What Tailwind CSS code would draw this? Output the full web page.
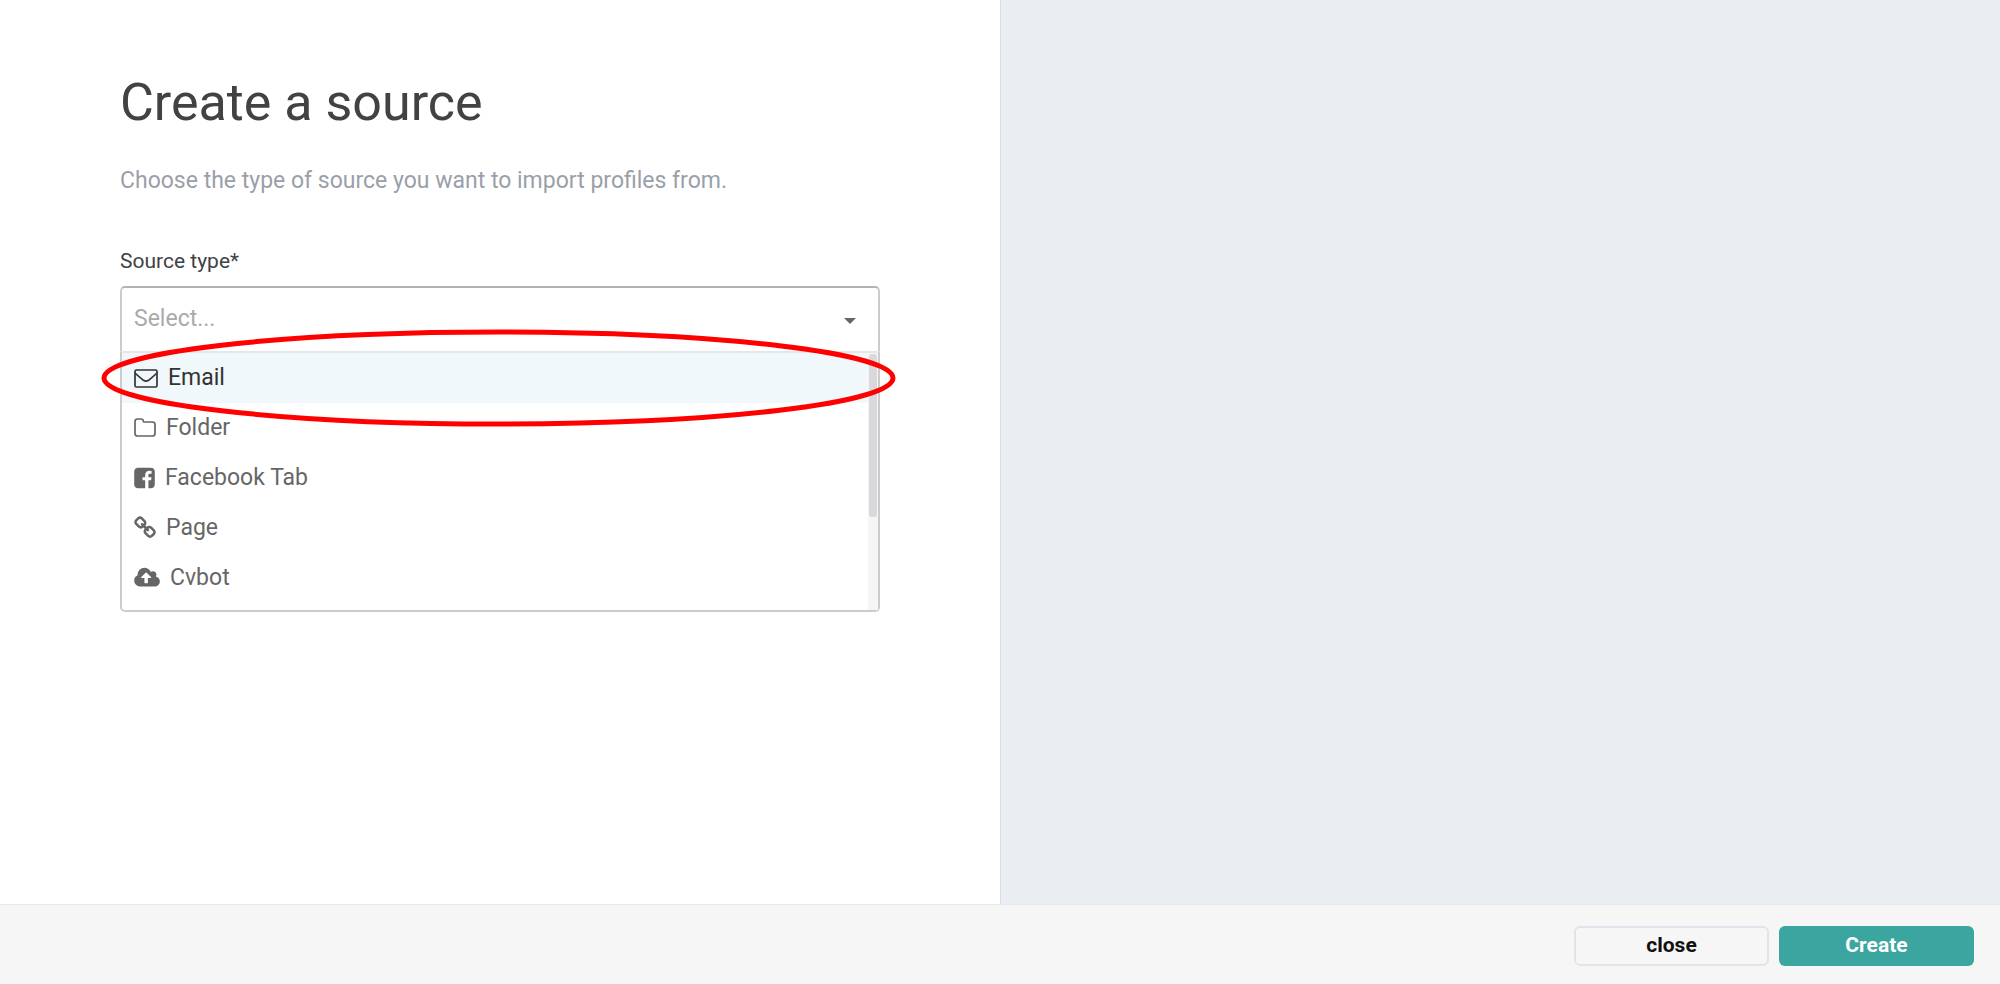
<!DOCTYPE html>
<html lang="en">
<head>
    <meta charset="UTF-8">
    <meta name="viewport" content="width=device-width, initial-scale=1.0">
    <title>Create a source</title>
    <script src="https://cdn.jsdelivr.net/npm/@tailwindcss/browser@4"></script>
</head>
<body class="min-h-screen flex flex-col bg-white font-['Roboto',sans-serif]">
    <main class="flex-1 grid grid-cols-2">
        <!-- Form -->
        <section class="px-[120px] pt-[71px]">
            <h1 class="text-[52px] leading-[64px] text-[#414244]">Create a source</h1>
            <p class="mt-8 text-[23px] leading-7 text-[#9a9fa8]">Choose the type of source you want to import profiles from.</p>

            <label for="source-type" class="block mt-[52px] text-[21px] leading-7 text-[#414244]">Source type*</label>
            <div class="relative mt-[11px]">
                <select id="source-type" class="block w-full h-[65px] appearance-none rounded-t-[5px] border-2 border-b-0 border-[#ccc] border-t-[#b3b3b3] bg-white px-3 text-[23px] text-[#aaa]">
                    <option>Select...</option>
                </select>
                <svg class="absolute right-6 top-8 w-3 h-[6px] pointer-events-none" viewBox="0 0 12 6" fill="#666"><path d="M0 0h12L6 6z"/></svg>
            </div>

            <!-- Dropdown menu -->
            <div class="relative rounded-b-[5px] border-2 border-[#ccc] border-t-[#e6e6e6] bg-white pb-[7px] text-[23px] leading-[50px] text-[#666]">
                <ul role="listbox" aria-label="Source type" class="mr-[10px]">
                    <li role="option" aria-selected="true" class="flex items-center gap-[10px] h-[50px] px-3 bg-[#f0f8fc] text-[#333]">
                        <svg class="w-6 h-6" viewBox="0 0 24 24" fill="none" stroke="currentColor" stroke-width="1.7"><rect x="1" y="4" width="22" height="17" rx="1.5"/><path d="M1 7c3 3 6 5.300 8.500 7.300 1.800 1.300 3.200 1.300 5 0C17 12.300 20 10 23 7"/></svg>
                        Email
                    </li>
                    <li role="option" aria-selected="false" class="flex items-center gap-[10px] h-[50px] px-3">
                        <svg class="w-[22px] h-6" viewBox="0 0 22 24" fill="none" stroke="currentColor" stroke-width="1.7"><path d="M1 5.500Q1 3 3.500 3H7q2.300 0 2.300 2.300Q9.300 6 10.500 6h8q2.500 0 2.500 2.500v9q0 2.500-2.500 2.500h-15Q1 20 1 17.500z"/></svg>
                        Folder
                    </li>
                    <li role="option" aria-selected="false" class="flex items-center gap-[10px] h-[50px] px-3">
                        <svg class="w-[21px] h-6" viewBox="0 0 1536 1792" fill="currentColor"><path d="M1248 128q119 0 203.500 84.500t84.500 203.500v960q0 119-84.500 203.500t-203.500 84.500h-188v-595h199l30-232h-229v-148q0-56 23.500-84t91.500-28l122-1v-207q-63-9-178-9-136 0-217.500 80t-81.500 226v171h-200v232h200v595h-532q-119 0-203.500-84.500t-84.500-203.500v-960q0-119 84.500-203.500t203.500-84.500h960z"/></svg>
                        Facebook Tab
                    </li>
                    <li role="option" aria-selected="false" class="flex items-center gap-[10px] h-[50px] px-3">
                        <svg class="w-[22px] h-6" viewBox="64 0 1664 1792" fill="currentColor"><path d="M1520 1216q0-40-28-68l-208-208q-28-28-68-28-42 0-72 32 3 3 19 18.500t21.500 21.500 15 19 13 25.500 3.500 27.500q0 40-28 68t-68 28q-15 0-27.500-3.500t-25.500-13-19-15-21.500-21.500-18.500-19q-33 31-33 73 0 40 28 68l206 207q27 27 68 27 40 0 68-26l147-146q28-28 28-67zm-703-705q0-40-28-68l-206-207q-28-28-68-28-39 0-68 27l-147 146q-28 28-28 67 0 40 28 68l208 208q27 27 68 27 42 0 72-31-3-3-19-18.500t-21.500-21.500-15-19-13-25.500-3.500-27.500q0-40 28-68t68-28q15 0 27.500 3.500t25.500 13 19 15 21.500 21.500 18.500 19q33-31 33-73zm895 705q0 120-85 203l-147 146q-83 83-203 83-121 0-204-85l-206-207q-83-83-83-203 0-123 88-209l-88-88q-86 88-208 88-120 0-204-84l-208-208q-84-84-84-204t85-203l147-146q83-83 203-83 121 0 204 85l206 207q83 83 83 203 0 123-88 209l88 88q86-88 208-88 120 0 204 84l208 208q84 84 84 204z"/></svg>
                        Page
                    </li>
                    <li role="option" aria-selected="false" class="flex items-center gap-[10px] h-[50px] px-3">
                        <svg class="w-[26px] h-6" viewBox="-64 0 1920 1792" fill="currentColor"><path d="M1216 864q0-14-9-23l-352-352q-9-9-23-9t-23 9l-351 351q-10 12-10 24 0 14 9 23t23 9h224v352q0 13 9.500 22.500t22.500 9.500h192q13 0 22.500-9.500t9.500-22.500v-352h224q13 0 22.500-9.500t9.500-22.500zm640 288q0 159-112.500 271.500t-271.500 112.500h-1088q-185 0-316.500-131.500t-131.500-316.500q0-130 70-240t188-165q-2-30-2-43 0-212 150-362t362-150q156 0 285.500 87t188.500 231q71-62 166-62 106 0 181 75t75 181q0 76-41 138 130 31 213.500 135.500t83.500 238.500z"/></svg>
                        Cvbot
                    </li>
                </ul>
                <!-- Scrollbar -->
                <div class="absolute inset-y-0 right-0 w-[10px] bg-[#f5f5f5] px-px">
                    <div class="mt-px h-[163px] rounded-[3px] bg-[#d9d8dd]"></div>
                </div>
                <!-- Highlight ring -->
                <div class="absolute -left-[18px] -right-[15px] -top-[21px] h-[92px] pointer-events-none">
                    <svg class="block w-full h-full overflow-visible" fill="none" stroke="#f00" stroke-width="5"><ellipse cx="50%" cy="50%" rx="50%" ry="50%"/></svg>
                </div>
            </div>
        </section>

        <aside class="border-l border-[#d5dfe8] bg-[#eaedf2]"></aside>
    </main>

    <!-- Footer actions -->
    <footer class="flex justify-end gap-[10px] border-t border-[#e8e8e8] bg-[#f6f6f6] pt-[21px] pb-[18px] pr-[26px] text-[21px] font-bold">
        <button type="button" class="w-[195px] h-10 rounded-md border-2 border-[#e0e5eb] text-[#111]">close</button>
        <button type="button" class="w-[195px] h-10 rounded-md bg-[#3ba5a0] text-white">Create</button>
    </footer>
</body>
</html>
